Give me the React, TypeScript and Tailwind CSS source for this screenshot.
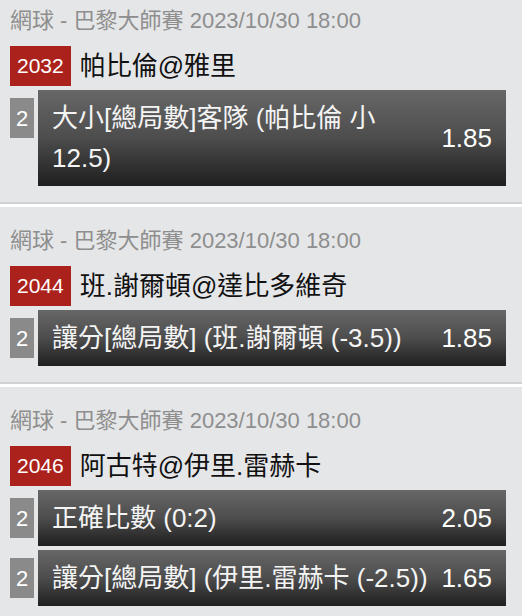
import React from 'react';

interface Bet {
    line: number
    label: string
    odds: string
}

interface Match {
    header: string
    code: string
    teams: string
    bets: Bet[]
}

const matches: Match[] = [
    {
        header: '網球 - 巴黎大師賽 2023/10/30 18:00',
        code: '2032',
        teams: '帕比倫@雅里',
        bets: [{ line: 2, label: '大小[總局數]客隊 (帕比倫 小 12.5)', odds: '1.85' }],
    },
    {
        header: '網球 - 巴黎大師賽 2023/10/30 18:00',
        code: '2044',
        teams: '班.謝爾頓@達比多維奇',
        bets: [{ line: 2, label: '讓分[總局數] (班.謝爾頓 (-3.5))', odds: '1.85' }],
    },
    {
        header: '網球 - 巴黎大師賽 2023/10/30 18:00',
        code: '2046',
        teams: '阿古特@伊里.雷赫卡',
        bets: [
            { line: 2, label: '正確比數 (0:2)', odds: '2.05' },
            { line: 2, label: '讓分[總局數] (伊里.雷赫卡 (-2.5))', odds: '1.65' },
        ],
    },
]

function BetRow({ bet }: { bet: Bet }) {
    return (
        <div className="flex items-start mt-1">
            <div className="w-6 h-10 mt-2 shrink-0 bg-[#8a8a8a] text-white text-[22px] flex items-center justify-center">
                {bet.line}
            </div>
            <div className="ml-1 flex-1 flex items-center px-[14px] py-2 text-[26px] text-[#f4f4f4] bg-gradient-to-b from-[#676767] via-[#4d4d4d] to-[#1f1f1f]">
                <div className="flex-1 min-w-0 leading-[40px]">{bet.label}</div>
                <div className="shrink-0 pl-2 leading-[40px] text-white">{bet.odds}</div>
            </div>
        </div>
    )
}

function MatchCard({ match, first, last }: { match: Match, first: boolean, last: boolean }) {
    return (
        <div className={first ? '' : 'border-t-[3px] border-white'}>
            <div className={`pl-[10px] pr-4 pb-4 ${first ? 'pt-[7px]' : 'pt-5'} ${last ? '' : 'border-b-2 border-[#d1d2d4]'}`}>
                <div className="text-[22px] leading-[28px] text-[#8e8e8e]">{match.header}</div>
                <div className="flex items-center mt-[11px]">
                    <div className="h-10 px-[7px] bg-[#ab211c] text-white text-[21px] flex items-center">
                        {match.code}
                    </div>
                    <div className="ml-[9px] text-[26px] text-[#111111]">{match.teams}</div>
                </div>
                {match.bets.map((bet, i) => <BetRow key={i} bet={bet} />)}
            </div>
        </div>
    )
}

export default function App() {
    return (
        <div className="w-[522px] min-h-[616px] bg-[#e5e6e8] font-['Liberation_Sans','Noto_Sans_CJK_TC',sans-serif]">
            {matches.map((m, i) => (
                <MatchCard key={m.code} match={m} first={i === 0} last={i === matches.length - 1} />
            ))}
        </div>
    )
}
